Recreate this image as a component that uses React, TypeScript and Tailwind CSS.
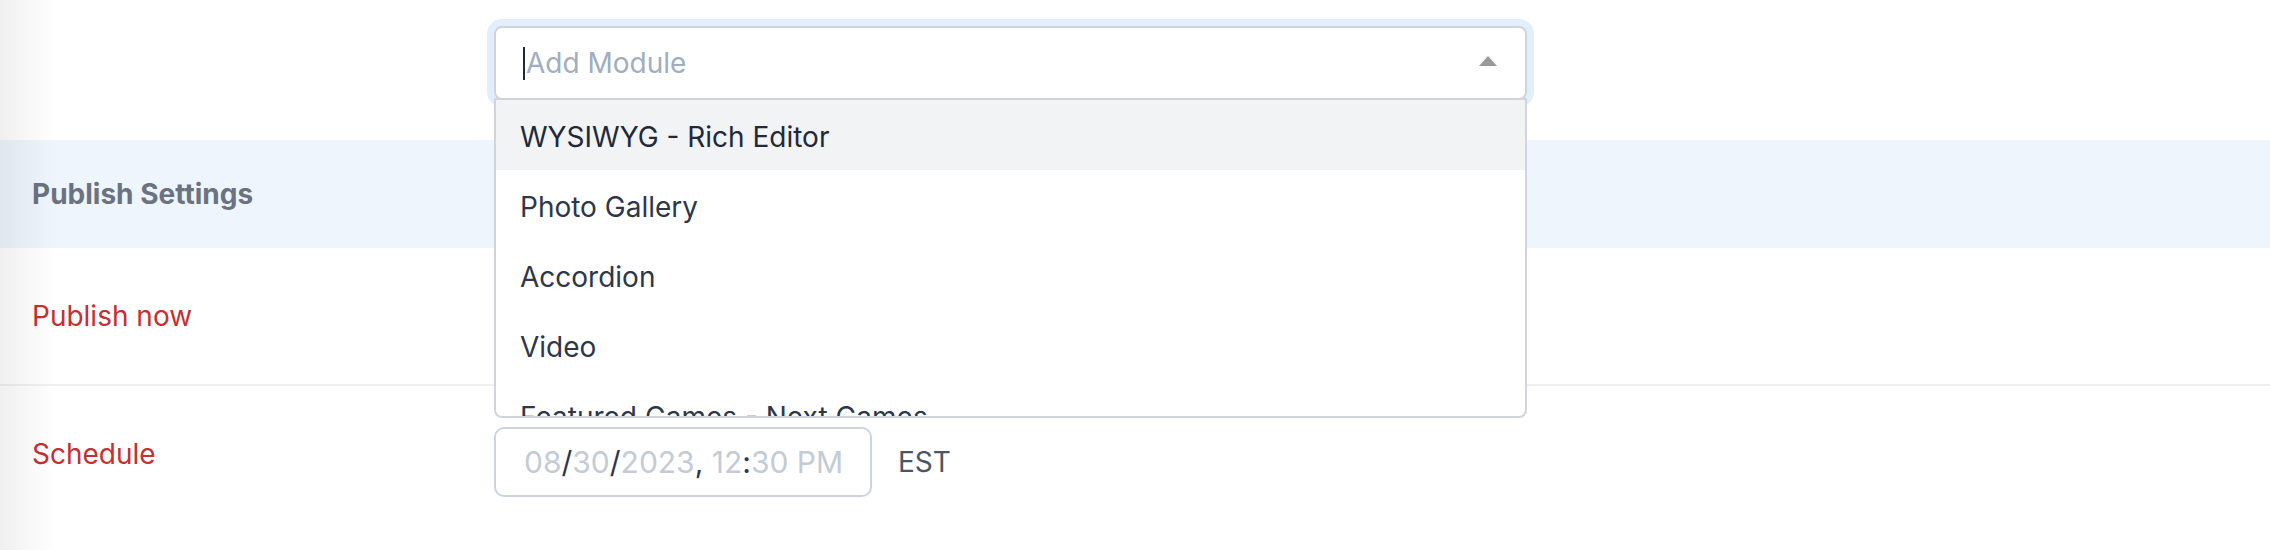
import React from "react";

const items = [
  "WYSIWYG - Rich Editor",
  "Photo Gallery",
  "Accordion",
  "Video",
  "Featured Games - Next Games",
];

export default function App() {
  return (
    <div
      className="relative w-[2270px] h-[550px] overflow-hidden bg-white text-[#2d3748]"
      style={{ fontFamily: "Inter, 'Noto Sans', sans-serif" }}
    >
      {/* Row: Add module select */}
      <div className="flex h-[140px]">
        <div className="w-[494px] shrink-0" />
        <div className="pt-[26px]">
          <div className="relative w-[1033px]">
            <div className="flex h-[74px] items-center rounded-[8px] border-2 border-[#cfd4da] bg-white pl-[27px] pr-[28px] shadow-[0_0_0_7px_#e2eefb]">
              <span className="h-[33px] w-[2px] bg-[#1f2937]" />
              <span className="ml-[1px] flex-1 text-[28px] leading-[40px] text-[#a0aec0]">
                Add Module
              </span>
              <svg width="18" height="10" viewBox="0 0 18 10" className="mb-[4px]">
                <polygon points="9,0 18,10 0,10" fill="#999999" />
              </svg>
            </div>
            <div className="absolute left-0 right-0 top-[72px] z-10 h-[320px] overflow-hidden rounded-b-[8px] border-2 border-[#d1d5db] bg-white">
              {items.map((it, i) => (
                <div
                  key={it}
                  className={
                    i === 0
                      ? "flex h-[70px] items-center bg-[#f2f3f5] pl-[24px] pt-[3px] text-[28px] text-[#1f2937]"
                      : "flex h-[70px] items-center pl-[24px] pt-[3px] text-[28px] text-[#2d3748]"
                  }
                >
                  {it}
                </div>
              ))}
            </div>
          </div>
        </div>
      </div>

      {/* Publish Settings band */}
      <div className="flex h-[108px] items-center bg-[#eef5fd] pl-[32px]">
        <span className="text-[28px] font-bold text-[#6b7280]">Publish Settings</span>
      </div>

      {/* Publish now */}
      <div className="flex h-[138px] items-center border-b-2 border-[#f0f0f0] pl-[32px]">
        <span className="text-[28px] text-[#c53030]">Publish now</span>
      </div>

      {/* Schedule */}
      <div className="flex">
        <div className="w-[494px] shrink-0 pl-[32px] pt-[48px]">
          <span className="text-[28px] leading-[40px] text-[#c53030]">Schedule</span>
        </div>
        <div className="flex items-center pt-[41px]">
          <div className="flex h-[70px] w-[378px] items-center rounded-[10px] border-2 border-[#cbd5e0] pl-[28px] text-[30px] text-[#c3cbd6]">
            <span>08</span>
            <span className="text-[#2d3748]">/</span>
            <span>30</span>
            <span className="text-[#2d3748]">/</span>
            <span>2023</span>
            <span className="text-[#2d3748]">,&nbsp;</span>
            <span>12</span>
            <span className="text-[#2d3748]">:</span>
            <span>30 PM</span>
          </div>
          <span className="ml-[26px] text-[28px] text-[#4a5568]">EST</span>
        </div>
      </div>

      {/* left edge shadow */}
      <div className="pointer-events-none absolute inset-y-0 left-0 w-[56px] bg-gradient-to-r from-black/[0.06] to-transparent" />
    </div>
  );
}
